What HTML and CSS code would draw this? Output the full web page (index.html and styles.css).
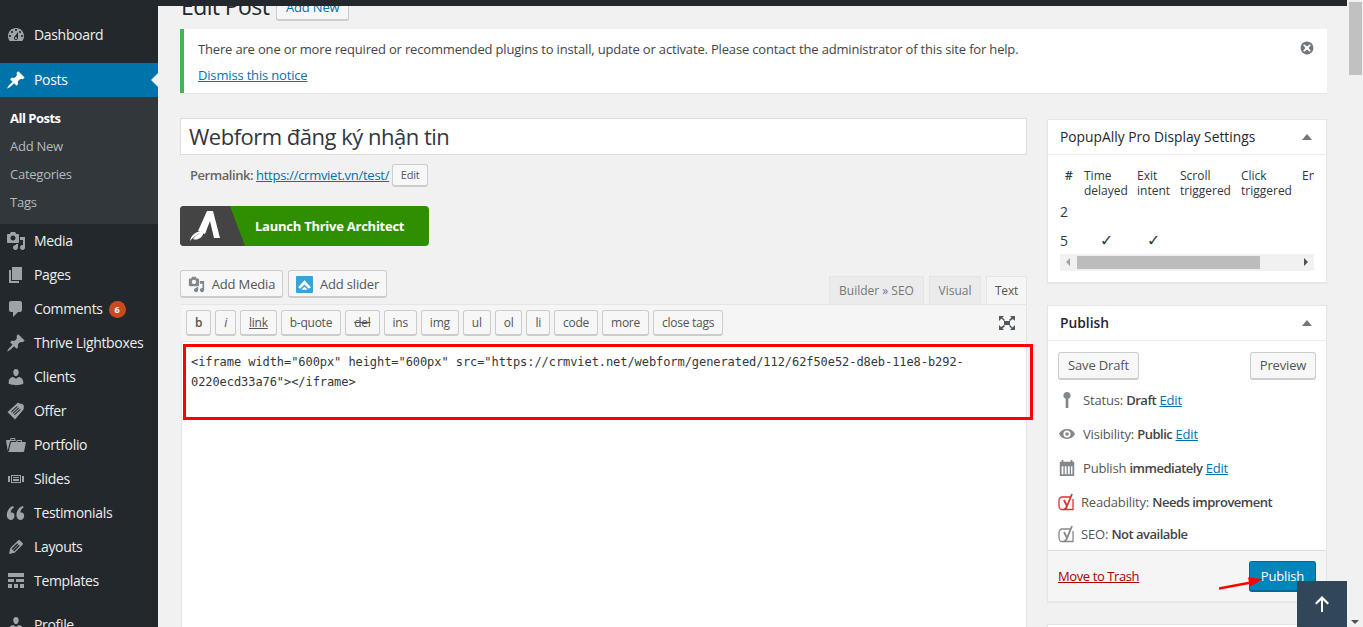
FILE: index.html
```html
<!DOCTYPE html>
<html lang="vi">
<head>
<meta charset="utf-8">
<title>Edit Post</title>
<link rel="stylesheet" href="styles.css">
</head>
<body>
<div class="page">
  <aside class="sidebar">
    <nav class="menu">
      <a class="item"><svg class="ico" viewBox="0 0 20 20"><path d="M3.76 16h12.48c1.1-1.37 1.76-3.11 1.76-5 0-4.42-3.58-8-8-8s-8 3.58-8 8c0 1.89.66 3.63 1.76 5zM10 4c.55 0 1 .45 1 1s-.45 1-1 1-1-.45-1-1 .45-1 1-1zM6 6c.55 0 1 .45 1 1s-.45 1-1 1-1-.45-1-1 .45-1 1-1zm8 0c.55 0 1 .45 1 1s-.45 1-1 1-1-.45-1-1 .45-1 1-1zm-5.37 5.55L12 7v6c0 1.1-.9 2-2 2s-2-.9-2-2c0-.57.24-1.08.63-1.45zM4 10c.55 0 1 .45 1 1s-.45 1-1 1-1-.45-1-1 .45-1 1-1zm12 0c.55 0 1 .45 1 1s-.45 1-1 1-1-.45-1-1 .45-1 1-1zm-5 3c0-.55-.45-1-1-1s-1 .45-1 1 .45 1 1 1 1-.45 1-1z" fill-rule="evenodd"/></svg>Dashboard</a>
      <div class="sep"></div>
      <a class="item current"><svg class="ico" viewBox="0 0 20 20"><path d="M10.44 3.02l1.82-1.82 6.36 6.35-1.83 1.82c-1.05-.68-2.48-.57-3.41.36l-.75.75c-.92.93-1.04 2.35-.35 3.41l-1.83 1.82-2.41-2.41-2.8 2.79c-.42.42-3.38 2.71-3.8 2.29s1.86-3.39 2.28-3.81l2.79-2.79L4.1 9.36l1.83-1.82c1.05.69 2.48.57 3.4-.36l.75-.75c.93-.92 1.05-2.35.36-3.41z"/></svg>Posts</a>
      <div class="submenu">
        <a class="sub active">All Posts</a>
        <a class="sub">Add New</a>
        <a class="sub">Categories</a>
        <a class="sub">Tags</a>
      </div>
      <a class="item"><svg class="ico" viewBox="0 0 20 20"><path d="M13 11V4c0-.55-.45-1-1-1h-1.67L9 1H5L3.67 3H2c-.55 0-1 .45-1 1v7c0 .55.45 1 1 1h10c.55 0 1-.45 1-1zM7 4.5c1.38 0 2.5 1.12 2.5 2.5S8.38 9.5 7 9.5 4.5 8.38 4.5 7 5.62 4.5 7 4.5zM14 6h5v10.5c0 1.38-1.12 2.5-2.5 2.5S14 17.88 14 16.5s1.12-2.5 2.5-2.5c.17 0 .34.02.5.05V9h-3V6zm-4 8.05V13h2v3.5c0 1.38-1.12 2.5-2.5 2.5S7 17.88 7 16.5 8.12 14 9.5 14c.17 0 .34.02.5.05z"/></svg>Media</a>
      <a class="item"><svg class="ico" viewBox="0 0 20 20"><path d="M6 15V2h10v13H6zm-1 1h8v2H3V5h2v11z"/></svg>Pages</a>
      <a class="item"><svg class="ico" viewBox="0 0 20 20"><path d="M5 2h9c1.1 0 2 .9 2 2v7c0 1.1-.9 2-2 2h-2l-5 5v-5H5c-1.1 0-2-.9-2-2V4c0-1.1.9-2 2-2z"/></svg>Comments<span class="badge">6</span></a>
      <a class="item"><svg class="ico" viewBox="0 0 20 20"><path d="M10.44 3.02l1.82-1.82 6.36 6.35-1.83 1.82c-1.05-.68-2.48-.57-3.41.36l-.75.75c-.92.93-1.04 2.35-.35 3.41l-1.83 1.82-2.41-2.41-2.8 2.79c-.42.42-3.38 2.71-3.8 2.29s1.86-3.39 2.28-3.81l2.79-2.79L4.1 9.36l1.83-1.82c1.05.69 2.48.57 3.4-.36l.75-.75c.93-.92 1.05-2.35.36-3.41z"/></svg>Thrive Lightboxes</a>
      <a class="item"><svg class="ico" viewBox="0 0 20 20"><path d="M10 9.25c-2.27 0-2.73-3.44-2.73-3.44C7 4.02 7.82 2 9.97 2c2.16 0 2.98 2.02 2.71 3.81 0 0-.41 3.44-2.68 3.44zm0 2.57L12.72 10c2.39 0 4.52 2.33 4.52 4.53v2.49s-3.65 1.13-7.24 1.13c-3.65 0-7.24-1.13-7.24-1.13v-2.49c0-2.25 1.94-4.48 4.47-4.48z"/></svg>Clients</a>
      <a class="item"><svg class="ico" viewBox="0 0 20 20"><path d="M12 1.5l1.500 1 3 .5 1.500 2-.5 3.500L9 18.500 1.500 11 12 1.500zM11 5L5 10.500l.7.700 6-5.500zm1.500 1.500l-6 5.500.7.700 6-5.500zM14 8l-6 5.500.7.700 6-5.500z" fill-rule="evenodd"/></svg>Offer</a>
      <a class="item"><svg class="ico" viewBox="0 0 20 20"><path d="M4 5H.78c-.37 0-.74.32-.69.84l1.56 9.99S3.5 8.47 3.86 6.7c.11-.53.61-.7.98-.7H10s-.7-2.08-.77-2.31C9.11 3.25 8.89 3 8.45 3H5.14c-.36 0-.7.23-.8.64C4.25 4.04 4 5 4 5zm4.88 0h-4s.42-1 .87-1h2.13c.48 0 1 1 1 1zM2.67 16.25c-.31.47-.76.75-1.26.75h15.73c.54 0 .92-.31 1.03-.83.44-2.19 1.68-8.44 1.68-8.44.07-.5-.3-.73-.62-.73H16V5.53c0-.16-.26-.53-.66-.53h-3.76c-.52 0-.87.58-.87.58L10 7H5.59c-.32 0-.63.19-.69.5 0 0-1.59 6.7-1.72 7.33-.07.37-.22.99-.51 1.42zM15.38 7H11s.58-1 1.13-1h2.29c.71 0 .96 1 .96 1z"/></svg>Portfolio</a>
      <a class="item"><svg class="ico" viewBox="0 0 20 20"><path d="M5 14V6h10v8H5zm-3-1V7h2v6H2zm4-6v6h8V7H6zm10 0h2v6h-2V7zm-3 2V8H7v1h6zm0 3v-2H7v2h6z" fill-rule="evenodd"/></svg>Slides</a>
      <a class="item"><svg class="ico" viewBox="0 0 20 20"><path d="M8.54 12.74c0-.87-.24-1.61-.72-2.22-.73-.92-2.14-1.03-2.96-.85-.34-1.93 1.3-4.39 3.42-5.45L6.65 3C3.45 4.41.78 8 .78 12c0 2.8 1.6 5 3.9 5 2.3 0 3.86-1.9 3.86-4.26zm9.62 0c0-.87-.24-1.61-.72-2.22-.73-.92-2.14-1.03-2.96-.85-.34-1.93 1.3-4.39 3.42-5.45L16.27 3c-3.2 1.41-5.87 5-5.87 9 0 2.8 1.6 5 3.9 5 2.3 0 3.86-1.9 3.86-4.26z"/></svg>Testimonials</a>
      <a class="item"><svg class="ico" viewBox="0 0 20 20"><path d="M13.89 3.39l2.71 2.72c.46.46.42 1.24.03 1.64l-8.01 8.02-5.56 1.16 1.16-5.58s7.6-7.63 7.99-8.03c.39-.39 1.22-.39 1.68.07zm-2.73 2.79l-5.59 5.61 1.11 1.11 5.54-5.65zm-2.97 8.23l5.58-5.6-1.07-1.08-5.59 5.6z" fill-rule="evenodd"/></svg>Layouts</a>
      <a class="item"><svg class="ico" viewBox="0 0 20 20"><path d="M2 2h16v4H2zM2 8h6v3H2zM10 8h8v3h-8zM2 13h4v4H2zM8 13h4v4H8zM14 13h4v4h-4z"/></svg>Templates</a>
      <div class="sep sep-short"></div>
      <a class="item"><svg class="ico" viewBox="0 0 20 20"><path d="M10 9.25c-2.27 0-2.73-3.44-2.73-3.44C7 4.02 7.82 2 9.97 2c2.16 0 2.98 2.02 2.71 3.81 0 0-.41 3.44-2.68 3.44zm0 2.57L12.72 10c2.39 0 4.52 2.33 4.52 4.53v2.49s-3.65 1.13-7.24 1.13c-3.65 0-7.24-1.13-7.24-1.13v-2.49c0-2.25 1.94-4.48 4.47-4.48z"/></svg>Profile</a>
    </nav>
  </aside>

  <main class="main">
    <div class="topbar"></div>
    <div class="wrap">
      <div class="heading">
        <h1 class="title">Edit Post</h1>
        <a class="btn-add">Add New</a>
      </div>
      <div class="notice">
        <div class="notice-text">
          <p class="notice-line">There are one or more required or recommended plugins to install, update or activate. Please contact the administrator of this site for help.</p>
          <p class="notice-line"><a class="link">Dismiss this notice</a></p>
        </div>
        <svg class="notice-x" viewBox="0 0 20 20"><path d="M10 2c4.420 0 8 3.580 8 8s-3.580 8-8 8-8-3.580-8-8 3.580-8 8-8zm3.500 3.300L10 8 6.500 5.300 5.300 6.500 8 10l-2.700 3.500 1.200 1.200L10 12l3.500 2.700 1.200-1.200L12 10l2.700-3.500z" fill-rule="evenodd"/></svg>
      </div>

      <div class="columns">
        <section class="post-body">
          <div class="title-input">Webform đăng ký nhận tin</div>
          <div class="permalink">
            <span class="perm-label">Permalink:</span>
            <a class="link perm-url">https://crmviet.vn/test/</a>
            <a class="btn btn-small">Edit</a>
          </div>
          <a class="thrive">
            <svg class="thrive-logo" viewBox="0 0 65 40">
              <polygon points="0,0 50,0 65,40 0,40" fill="#444"/>
              <path d="M18 25L27 5h6l7 27h-6l-4-17-5 13z" fill="#fff"/>
              <path d="M10 35c1-6 6-10 14-10-1 7-7 10-11 8 2-3 5-5 8-6-4 1-8 4-11 8z" fill="#fff"/>
            </svg>
            <span class="thrive-label">Launch Thrive Architect</span>
          </a>
          <div class="editor-head">
            <div class="media-btns">
              <a class="btn btn-media btn-m1"><svg class="btn-ico" viewBox="0 0 20 20"><path d="M13 11V4c0-.55-.45-1-1-1h-1.67L9 1H5L3.67 3H2c-.55 0-1 .45-1 1v7c0 .55.45 1 1 1h10c.55 0 1-.45 1-1zM7 4.5c1.38 0 2.5 1.12 2.5 2.5S8.38 9.5 7 9.5 4.5 8.38 4.5 7 5.62 4.5 7 4.5zM14 6h5v10.5c0 1.38-1.12 2.5-2.5 2.5S14 17.88 14 16.5s1.12-2.5 2.5-2.5c.17 0 .34.02.5.05V9h-3V6zm-4 8.05V13h2v3.5c0 1.38-1.12 2.5-2.5 2.5S7 17.88 7 16.5 8.12 14 9.5 14c.17 0 .34.02.5.05z"/></svg>Add Media</a>
              <a class="btn btn-media btn-m2"><svg class="btn-ico" viewBox="0 0 16 16"><rect width="16" height="16" rx="1" fill="#3aa3d6"/><path d="M2 10.500L8 4l6 6.500-2 1.500-4-4-4 4z" fill="#fff"/><path d="M5 13l3-3 3 3z" fill="#fff"/></svg>Add slider</a>
            </div>
            <div class="tabs">
              <a class="tab tab-1">Builder » SEO</a>
              <a class="tab tab-2">Visual</a>
              <a class="tab tab-on">Text</a>
            </div>
          </div>
          <div class="toolbar">
            <a class="tbtn tbtn-b">b</a>
            <a class="tbtn tbtn-i">i</a>
            <a class="tbtn tbtn-u">link</a>
            <a class="tbtn">b-quote</a>
            <a class="tbtn tbtn-s">del</a>
            <a class="tbtn">ins</a>
            <a class="tbtn">img</a>
            <a class="tbtn">ul</a>
            <a class="tbtn">ol</a>
            <a class="tbtn">li</a>
            <a class="tbtn">code</a>
            <a class="tbtn">more</a>
            <a class="tbtn">close tags</a>
            <svg class="fullscreen" viewBox="0 0 18 16"><path d="M6 6h6v4H6zM1 1h5L4.400 2.600 7 5 6 6 3.500 3.500 1 6zM17 1v5l-2-2-3 2-1-1 2.500-2.500L12 1zM1 15v-5l2 2 3-2 1 1-2.500 2.500L6 15zM17 15h-5l1.500-1.500L11 11l1-1 2.500 2.500L17 10z"/></svg>
          </div>
          <div class="editor">&lt;iframe width="600px" height="600px" src="https://crmviet.net/webform/generated/112/62f50e52-d8eb-11e8-b292-0220ecd33a76"&gt;&lt;/iframe&gt;</div>
        </section>

        <section class="side">
          <div class="box">
            <div class="box-head"><span class="box-title">PopupAlly Pro Display Settings</span><span class="caret"></span></div>
            <div class="popup-body">
              <div class="table-clip">
                <table class="ptable">
                  <tr class="phead"><th class="c0 hash">#</th><th class="c1">Time delayed</th><th class="c2">Exit intent</th><th class="c3">Scroll triggered</th><th class="c4">Click triggered</th><th class="c5">Enabled</th></tr>
                  <tr class="row-a"><td>2</td><td></td><td></td><td></td><td></td><td></td></tr>
                  <tr class="row-b"><td>5</td><td class="chk">✓</td><td class="chk chk-2">✓</td><td></td><td></td><td></td></tr>
                </table>
              </div>
              <div class="hscroll"><span class="arrow-l"></span><span class="hthumb"></span><span class="arrow-r"></span></div>
            </div>
          </div>

          <div class="box">
            <div class="box-head"><span class="box-title strong">Publish</span><span class="caret"></span></div>
            <div class="pub-actions"><a class="btn btn-pub btn-save">Save Draft</a><a class="btn btn-pub btn-prev">Preview</a></div>
            <div class="pub-row pr-tall"><svg class="pi" viewBox="0 0 20 20"><path d="M10 1a4 4 0 0 1 1.500 7.700V19h-3V8.700A4 4 0 0 1 10 1z"/></svg><span>Status: <b>Draft</b> <a class="link">Edit</a></span></div>
            <div class="pub-row"><svg class="pi" viewBox="0 0 20 20"><path d="M1 10c2-3.500 5-5.500 9-5.500s7 2 9 5.500c-2 3.500-5 5.500-9 5.500S3 13.500 1 10zm9-4a4 4 0 1 0 0 8 4 4 0 0 0 0-8zm0 2a2 2 0 1 1 0 4 2 2 0 0 1 0-4z" fill-rule="evenodd"/></svg><span>Visibility: <b>Public</b> <a class="link">Edit</a></span></div>
            <div class="pub-row"><svg class="pi" viewBox="0 0 20 20"><path d="M2 3h2V1h2v2h8V1h2v2h2v16H2zm2 5v9h2V8zm3.500 0v9h2V8zm3.500 0v9h2V8zm3.500 0v9H16V8z" fill-rule="evenodd"/></svg><span>Publish <b>immediately</b> <a class="link">Edit</a></span></div>
            <div class="pub-row pub-yoast"><svg class="yo yo-red" viewBox="0 0 18 18"><path d="M4 4h8M4 4C2.500 4 1 5.500 1 7v6c0 2 1.500 3.500 3 3.500h11V6"/><path class="yo-y" d="M6 7l3 6 5-12M9 13c-.5 2-1.500 3-3 3.500"/></svg><span>Readability: <b>Needs improvement</b></span></div>
            <div class="pub-row pub-yoast pub-last"><svg class="yo yo-grey" viewBox="0 0 18 18"><path d="M4 4h8M4 4C2.500 4 1 5.500 1 7v6c0 2 1.500 3.500 3 3.500h11V6"/><path class="yo-y" d="M6 7l3 6 5-12M9 13c-.5 2-1.500 3-3 3.500"/></svg><span>SEO: <b>Not available</b></span></div>
            <div class="pub-foot"><a class="trash">Move to Trash</a><a class="btn-primary">Publish</a></div>
          </div>
          <div class="box box-next"></div>
        </section>
      </div>
    </div>
  </main>

  <div class="scrollbar"><span class="sthumb"></span><span class="sdown"></span></div>

  <div class="redbox"></div>
  <svg class="redarrow" viewBox="0 0 46 14"><path d="M0 12.500L32 6.500" stroke="#f00" stroke-width="2.500" fill="none"/><polygon points="44,3 29,1.500 31,10.500" fill="#f00"/></svg>
  <a class="totop"><svg class="totop-ico" viewBox="0 0 16 18"><path d="M8 1l7 7-1.500 1.500L9 5.200V17H7V5.200L2.500 9.500 1 8z" fill="#fff"/></svg></a>
</div>
</body>
</html>
```

FILE: styles.css
```css
* { box-sizing: border-box; }
html, body { margin: 0; padding: 0; height: 100%; overflow: hidden; }
body { background: #f1f1f1; color: #444; font: 13px/1.4 "Open Sans", sans-serif; letter-spacing: -.17px; }
p, h1 { margin: 0; }
a { color: inherit; }

.page { position: relative; display: flex; height: 627px; width: 1363px; overflow: hidden; }

/* Sidebar */
.sidebar { width: 158px; flex: none; background: #23282d; padding-top: 18px; }
.menu { display: flex; flex-direction: column; }
.item { position: relative; display: flex; align-items: center; flex: none; height: 34px; padding-left: 34px; color: #eee; font-size: 14px; letter-spacing: -.33px; }
.ico { position: absolute; left: 6px; top: 7px; width: 20px; height: 20px; fill: #9ea3a8; }
.sep { height: 11px; flex: none; }
.sep-short { height: 10px; }
.current { background: #0073aa; color: #fff; }
.current .ico { fill: #fff; }
.current::after { content: ""; position: absolute; right: 0; top: 10px; border: 7px solid transparent; border-right-color: #f1f1f1; border-left: 0; }
.submenu { background: #32373c; padding: 7px 0 8px; display: flex; flex-direction: column; }
.sub { height: 28px; line-height: 28px; padding-left: 10px; color: #b4b9be; font-size: 13px; letter-spacing: -.25px; }
.active { color: #fff; font-weight: 700; letter-spacing: -.5px; }
.badge { width: 17px; height: 17px; margin-left: 6px; border-radius: 50%; background: #ca4a1f; color: #fff; font-size: 9px; font-weight: 700; line-height: 17px; text-align: center; letter-spacing: 0; }

/* Main */
.main { flex: 1; min-width: 0; display: flex; flex-direction: column; }
.topbar { height: 6px; flex: none; background: #23282d; }
.wrap { flex: 1; min-height: 0; overflow: hidden; padding: 0 20px 0 22px; }
.heading { display: flex; align-items: flex-end; gap: 7px; height: 28px; margin-top: -13px; }
.title { font-size: 23px; font-weight: 400; line-height: 29px; color: #23282d; padding-left: 1px; letter-spacing: -.6px; }
.btn-add { height: 28px; width: 73px; border: 1px solid #ccc; border-bottom-width: 2px; border-radius: 3px; background: #f7f7f7; color: #0073aa; line-height: 26px; text-align: center; }

.notice { display: flex; justify-content: space-between; height: 64px; margin-top: 8px; padding: 10px 12px 0 14px; background: #fff; border-left: 4px solid #46b450; box-shadow: 0 1px 1px rgba(0,0,0,.04); }
.notice-line { height: 26px; line-height: 20px; }
.link { color: #0073aa; text-decoration: underline; }
.notice-x { width: 16px; height: 16px; margin-top: 1px; fill: #72777c; }

.columns { display: flex; gap: 20px; margin-top: 25px; align-items: flex-start; }
.post-body { width: 847px; flex: none; }
.side { width: 280px; flex: none; margin-top: 1px; }

.title-input { height: 37px; border: 1px solid #ddd; background: #fff; padding-left: 8px; font-size: 22px; line-height: 35px; color: #32373c; letter-spacing: -.5px; }
.permalink { display: flex; align-items: center; height: 23px; margin-top: 9px; padding-left: 10px; color: #666; white-space: nowrap; }
.perm-label { font-weight: 600; margin-right: 3px; letter-spacing: -.45px; }
.perm-url { letter-spacing: -.28px; }
.btn { display: flex; align-items: center; justify-content: center; border: 1px solid #ccc; border-bottom-width: 2px; border-radius: 3px; background: #f7f7f7; color: #555; white-space: nowrap; }
.btn-small { width: 36px; height: 23px; margin-left: 3px; font-size: 11px; }

.thrive { display: flex; align-items: center; width: 249px; height: 40px; margin-top: 19px; border-radius: 4px; overflow: hidden; background: #2f8f00; color: #fff; }
.thrive-logo { width: 65px; height: 40px; flex: none; }
.thrive-label { margin-left: 10px; font-weight: 700; letter-spacing: -.25px; }

.editor-head { display: flex; justify-content: space-between; align-items: flex-end; height: 34px; margin-top: 24px; }
.media-btns { display: flex; gap: 5px; align-self: flex-start; }
.btn-media { height: 28px; gap: 7px; padding-top: 1px; color: #555; }
.btn-m1 { width: 103px; }
.btn-m2 { width: 99px; }
.btn-ico { width: 17px; height: 17px; flex: none; fill: #82878c; }
.tabs { display: flex; gap: 5px; }
.tab { height: 28px; border: 1px solid #e5e5e5; border-bottom: 0; background: #ebebeb; color: #777; font-size: 12px; line-height: 28px; text-align: center; letter-spacing: 0; }
.tab-1 { width: 95px; }
.tab-2 { width: 52px; }
.tab-on { width: 41px; height: 29px; background: #f5f5f5; color: #555; margin-bottom: -1px; position: relative; letter-spacing: -.2px; }

.toolbar { display: flex; align-items: center; gap: 4px; height: 38px; margin-left: 1px; padding: 0 5px; background: #f5f5f5; border: 1px solid #e5e5e5; border-left: 0; position: relative; }
.tbtn { display: block; height: 26px; padding: 0 8px; border: 1px solid #ccc; border-bottom-width: 2px; border-radius: 3px; background: #f7f7f7; color: #555; font-size: 12px; line-height: 24px; letter-spacing: -.25px; }
.tbtn-b { font-weight: 600; }
.tbtn-i { font-style: italic; }
.tbtn-u { text-decoration: underline; }
.tbtn-s { text-decoration: line-through; }
.fullscreen { width: 18px; height: 16px; margin-left: auto; margin-right: 5px; fill: #50575e; }
.editor { height: 600px; margin-left: 1px; background: #fff; border: 1px solid #e5e5e5; border-top: 0; padding: 10px 9px; font: 12px/20px "DejaVu Sans Mono", monospace; letter-spacing: -.07px; color: #32373c; }

/* Side boxes */
.box { background: #fff; border: 1px solid #e5e5e5; box-shadow: 0 1px 1px rgba(0,0,0,.04); margin-bottom: 22px; }
.box-head { display: flex; justify-content: space-between; align-items: center; height: 35px; padding: 0 14px 0 12px; border-bottom: 1px solid #eee; }
.box-title { font-size: 13.8px; color: #23282d; font-weight: 400; letter-spacing: 0; }
.strong { font-weight: 600; }
.caret { width: 0; height: 0; border: 5px solid transparent; border-bottom: 6px solid #72777c; border-top: 0; }

.popup-body { padding: 13px 12px 0; height: 127px; }
.table-clip { width: 254px; overflow: hidden; height: 87px; }
.ptable { border-collapse: collapse; table-layout: fixed; width: 300px; font-size: 12px; line-height: 15px; color: #32373c; letter-spacing: 0; }
.ptable th, .ptable td { padding: 0; text-align: left; vertical-align: top; font-weight: 400; }
.c0 { width: 24px; } .c1 { width: 53px; } .c2 { width: 43px; } .c3 { width: 61px; } .c4 { width: 61px; } .c5 { width: 58px; }
.ptable .hash { padding-left: 5px; font-weight: 600; }
.ptable .row-a td, .ptable .row-b td { font-size: 14px; vertical-align: middle; }
.ptable .row-a td { padding-bottom: 2px; }
.row-a, .row-b { height: 28px; }
.ptable .row-b .chk { font-family: "DejaVu Sans", sans-serif; padding-left: 16px; font-size: 16px; }
.ptable .row-b .chk-2 { padding-left: 10px; }
.hscroll { height: 17px; margin-top: -1px; background: #f1f1f1; position: relative; }
.hthumb { position: absolute; left: 17px; top: 2px; width: 183px; height: 13px; background: #bcbcbc; }
.arrow-l { position: absolute; left: 6px; top: 4px; border: 4px solid transparent; border-right: 4px solid #a3a3a3; border-left: 0; }
.arrow-r { position: absolute; right: 6px; top: 4px; border: 4px solid transparent; border-left: 4px solid #505050; border-right: 0; }

.pub-actions { display: flex; justify-content: space-between; padding: 11px 10px 0; height: 40px; }
.btn-pub { height: 28px; }
.btn-save { width: 81px; }
.btn-prev { width: 66px; }
.pub-row { display: flex; align-items: center; gap: 7px; height: 34px; padding-left: 10px; color: #555; }
.pub-row b { font-weight: 600; color: #444; letter-spacing: -.5px; }
.pr-tall { margin-top: 2px; }
.pi { width: 18px; height: 18px; flex: none; fill: #82878c; }
.pub-yoast { gap: 5px; }
.pub-last { height: 30px; }
.yo { width: 18px; height: 18px; flex: none; fill: none; stroke-width: 1.300; }
.yo-red { stroke: #dc3232; }
.yo-grey { stroke: #888; }
.yo-y { stroke-width: 1.800; }
.pub-foot { display: flex; justify-content: space-between; align-items: center; height: 51px; padding: 0 10px; margin-top: 1px; background: #f5f5f5; border-top: 1px solid #ddd; }
.trash { color: #a00; text-decoration: underline; letter-spacing: -.4px; }
.btn-primary { width: 67px; height: 31px; border: 1px solid #006799; border-bottom-width: 2px; border-radius: 3px; background: #0085ba; color: #fff; text-align: center; line-height: 28px; }
.box-next { height: 60px; }

/* Scrollbar */
.scrollbar { position: relative; width: 16px; flex: none; background: #f1f1f1; }
.sthumb { position: absolute; left: 2px; top: 2px; width: 13px; height: 73px; background: #c1c1c1; }
.sdown { position: absolute; left: 4px; bottom: 3px; border: 4px solid transparent; border-top: 4px solid #505050; border-bottom: 0; }

/* Overlays */
.redbox { position: absolute; left: 183px; top: 344px; width: 850px; height: 76px; border: 3px solid #f00; }
.redarrow { position: absolute; left: 1219px; top: 576px; width: 46px; height: 14px; }
.totop { position: absolute; left: 1297px; top: 581px; width: 50px; height: 46px; background: #32465a; display: flex; align-items: center; justify-content: center; }
.totop-ico { width: 16px; height: 18px; }
```
